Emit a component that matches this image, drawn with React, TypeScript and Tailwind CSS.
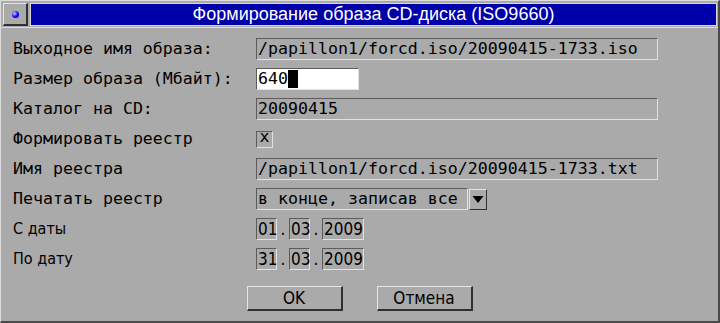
import type { ReactNode } from "react";

const mono = "font-['DejaVu_Sans_Mono','Liberation_Mono',monospace] text-[16.6px]";
const narrow = "font-['DejaVu_Sans_Condensed','Liberation_Sans_Narrow',sans-serif] text-[16px]";
const sunken = "border border-t-[#5c5c5c] border-l-[#5c5c5c] border-b-[#e2e2e2] border-r-[#e2e2e2]";
const raised = "border border-t-[#e6e6e6] border-l-[#e6e6e6] border-b-[#303030] border-r-[#303030]";

const Row = ({ label, narrowLabel, children }: { label: string; narrowLabel?: boolean; children: ReactNode }) => (
  <div className="flex h-[22px] items-center">
    <div className={`w-[243px] text-black ${narrowLabel ? narrow : mono}`}>{label}</div>
    {children}
  </div>
);

const Field = ({ value, width }: { value: string; width: string }) => (
  <div className={`h-[22px] ${width} ${sunken} pl-px leading-[20px] text-black ${mono} whitespace-pre`}>{value}</div>
);

const DateField = ({ d, m, y }: { d: string; m: string; y: string }) => (
  <div className={`flex h-[22px] items-center text-black ${narrow} text-[17px]`}>
    <div className={`h-[22px] w-[21px] ${sunken} pl-px leading-[20px]`}>{d}</div>
    <div className="w-[12px] text-center leading-[20px]">.</div>
    <div className={`h-[22px] w-[21px] ${sunken} pl-px leading-[20px]`}>{m}</div>
    <div className="w-[12px] text-center leading-[20px]">.</div>
    <div className={`h-[22px] w-[42px] ${sunken} pl-px leading-[20px]`}>{y}</div>
  </div>
);

export default function App() {
  return (
    <div className="flex h-[323px] w-[720px] flex-col border-l border-t border-l-[#dcdcdc] border-t-[#dcdcdc] border-r-2 border-b-2 border-r-[#4a4a4a] border-b-[#4a4a4a] bg-[#aaaaaa]">
      <div className="flex h-[26px] items-start gap-[2px] pl-[2px] pt-[2px] pr-[1px]">
        <div className={`flex h-[23px] w-[25px] items-center justify-center ${raised} border-b-2 border-r-2`}>
          <div className="h-[7px] w-[7px] rounded-full bg-[radial-gradient(circle_at_35%_35%,#c8c8ff,#0000ff_55%,#000088)]" />
        </div>
        <div className="flex h-[23px] flex-1 items-center justify-center border border-[#d8d8d8] bg-[#0000aa] font-['Liberation_Sans',Arial,sans-serif] text-[18px] text-white">
          Формирование образа CD-диска (ISO9660)
        </div>
      </div>
      <div className="flex flex-1 flex-col border-t border-t-[#dcdcdc] pl-[12px]">
        <div className="flex flex-col gap-[8px] pt-[10px]">
          <Row label="Выходное имя образа:">
            <Field value="/papillon1/forcd.iso/20090415-1733.iso" width="w-[402px]" />
          </Row>
          <Row label="Размер образа (Мбайт):">
            <div className={`flex h-[22px] w-[103px] items-center bg-white ${sunken} pl-px leading-[20px] text-black ${mono}`}>
              <span>640</span>
              <span className="inline-block h-[18px] w-[10px] bg-black" />
            </div>
          </Row>
          <Row label="Каталог на CD:">
            <Field value="20090415" width="w-[402px]" />
          </Row>
          <Row label="Формировать реестр">
            <div className={`flex h-[17px] w-[17px] items-center justify-center ${sunken} text-black ${mono} leading-none`}>
              <span className="-mt-[3px]">x</span>
            </div>
          </Row>
          <Row label="Имя реестра">
            <Field value="/papillon1/forcd.iso/20090415-1733.txt" width="w-[402px]" />
          </Row>
          <Row label="Печатать реестр">
            <div className="flex items-center gap-px">
              <Field value="в конце, записав все" width="w-[212px]" />
              <div className={`flex h-[21px] w-[18px] items-center justify-center ${raised}`}>
                <svg width="12" height="9" viewBox="0 0 12 9">
                  <path d="M0.5 1 L11.5 1 L6 8 Z" fill="#000" />
                </svg>
              </div>
            </div>
          </Row>
          <Row label="С даты" narrowLabel>
            <DateField d="01" m="03" y="2009" />
          </Row>
          <Row label="По дату" narrowLabel>
            <DateField d="31" m="03" y="2009" />
          </Row>
        </div>
        <div className={`mt-[16px] flex justify-center gap-[34px] pr-[12px] ${narrow} text-[17px] text-black`}>
          <button className={`h-[25px] w-[96px] ${raised} border-b-2 border-r-2 leading-[20px]`}>OK</button>
          <button className={`h-[25px] w-[96px] ${raised} border-b-2 border-r-2 leading-[20px]`}>Отмена</button>
        </div>
      </div>
    </div>
  );
}
